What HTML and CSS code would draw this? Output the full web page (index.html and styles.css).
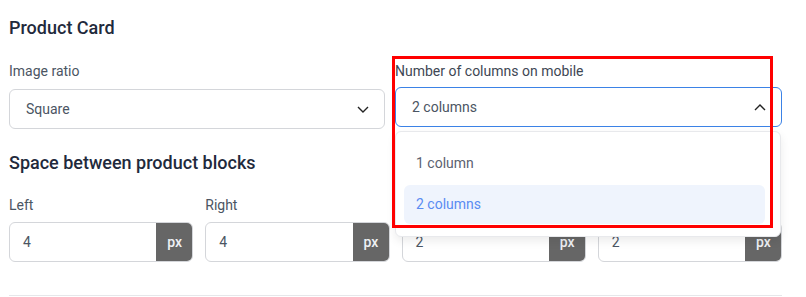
FILE: index.html
```html
<!DOCTYPE html>
<html lang="en">
<head>
    <meta charset="UTF-8">
    <meta name="viewport" content="width=device-width, initial-scale=1.0">
    <title>Product Card settings</title>
    <link rel="stylesheet" href="styles.css">
</head>
<body>
    <div class="panel">
        <h3 class="section-title">Product Card</h3>

        <div class="row-two">
            <div class="field">
                <label class="field-label">Image ratio</label>
                <div class="select">
                    <span>Square</span>
                    <svg class="chevron" width="12" height="7" viewBox="0 0 12 7"><path d="M1 1l5 5 5-5" fill="none" stroke="#222" stroke-width="1.4"/></svg>
                </div>
            </div>

            <div class="field field-open">
                <label class="field-label">Number of columns on mobile</label>
                <div class="select select-active">
                    <span>2 columns</span>
                    <svg class="chevron" width="12" height="7" viewBox="0 0 12 7"><path d="M1 6l5-5 5 5" fill="none" stroke="#222" stroke-width="1.4"/></svg>
                </div>
                <div class="dropdown">
                    <div class="option">1 column</div>
                    <div class="option selected">2 columns</div>
                </div>
            </div>
        </div>

        <h3 class="section-title second">Space between product blocks</h3>

        <div class="row-four">
            <div class="field">
                <label class="field-label">Left</label>
                <div class="unit-input"><span class="value">4</span><span class="unit">px</span></div>
            </div>
            <div class="field">
                <label class="field-label">Right</label>
                <div class="unit-input"><span class="value">4</span><span class="unit">px</span></div>
            </div>
            <div class="field">
                <label class="field-label">Top</label>
                <div class="unit-input"><span class="value">2</span><span class="unit">px</span></div>
            </div>
            <div class="field">
                <label class="field-label">Bottom</label>
                <div class="unit-input"><span class="value">2</span><span class="unit">px</span></div>
            </div>
        </div>

        <div class="divider"></div>

        <!-- highlight annotation drawn over the open select -->
        <div class="highlight"></div>
    </div>
</body>
</html>
```

FILE: styles.css
```css
body {
    margin: 0;
    font-family: Roboto, "Liberation Sans", Arial, sans-serif;
    background: #fff;
    color: #4b5563;
}
.panel {
    position: relative;
    width: 773px;
    padding: 16px 0 0 9px;
}
.section-title {
    margin: 0;
    font-size: 18px;
    line-height: 24px;
    font-weight: 500;
    color: #1f2a3c;
}
.section-title.second {
    margin-top: 22px;
}
.row-two {
    display: grid;
    grid-template-columns: 376px 1fr;
    gap: 10px;
    margin-top: 21px;
}
.field-label {
    display: block;
    font-size: 14px;
    line-height: 20px;
    color: #4b5563;
    margin-bottom: 8px;
}
.field-open {
    position: relative;
}
.field-open .field-label {
    margin-bottom: 6px;
    color: #404754;
}
.select {
    height: 40px;
    box-sizing: border-box;
    border: 1px solid #d4d6da;
    border-radius: 6px;
    display: flex;
    align-items: center;
    justify-content: space-between;
    padding: 0 15px 0 16px;
    font-size: 14px;
    color: #4b5563;
}
.select-active {
    border-color: #3b82e6;
}
.dropdown {
    position: absolute;
    left: 0;
    right: 1px;
    top: 70px;
    z-index: 2;
    background: #fff;
    border: 1px solid #e8e9ec;
    border-radius: 6px;
    box-shadow: 0 4px 10px rgba(0, 0, 0, 0.08);
    padding: 12px 15px 12px 8px;
    display: flex;
    flex-direction: column;
    gap: 2px;
}
.option {
    height: 39px;
    line-height: 39px;
    padding-left: 12px;
    border-radius: 6px;
    font-size: 14px;
    color: #5b6270;
}
.option.selected {
    background: #eff4fd;
    color: #5a8cf2;
}
.row-four {
    display: grid;
    grid-template-columns: repeat(4, 1fr);
    gap: 12px;
    margin-top: 20px;
}
.row-four .field-label {
    margin-bottom: 7px;
}
.unit-input {
    height: 40px;
    box-sizing: border-box;
    border: 1px solid #d4d6da;
    border-radius: 6px;
    display: flex;
    overflow: hidden;
    font-size: 14px;
}
.unit-input .value {
    flex: 1;
    padding-left: 13px;
    line-height: 38px;
    color: #4b5563;
}
.unit-input .unit {
    width: 37px;
    background: #666;
    color: #eef0f4;
    font-weight: 500;
    text-align: center;
    line-height: 38px;
    margin: -1px -1px -1px 0;
    padding-top: 1px;
}
.divider {
    margin-top: 33px;
    height: 1px;
    background: #e6e7ea;
}
.highlight {
    position: absolute;
    left: 392px;
    top: 56px;
    width: 375px;
    height: 166px;
    border: 3px solid #ff0000;
    z-index: 3;
}
```
